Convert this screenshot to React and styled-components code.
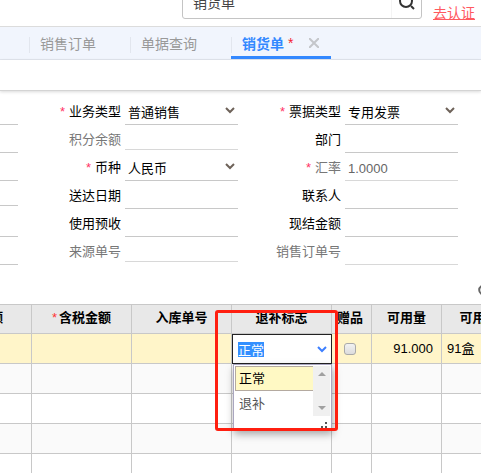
import { useEffect, useRef, useState } from "react";
import styled, { createGlobalStyle } from "styled-components";

const leftFields = [{}, {}, {}, { short: true }, {}, {}];

const middleFields = [
    { id: "bizType", label: "业务类型", required: true, options: ["普通销售"] },
    { id: "points", label: "积分余额", muted: true, short: true },
    { id: "currency", label: "币种", required: true, options: ["人民币"] },
    { id: "deliveryDate", label: "送达日期" },
    { id: "prepaid", label: "使用预收" },
    { id: "sourceNo", label: "来源单号", muted: true, short: true },
];

const rightFields = [
    { id: "invoiceType", label: "票据类型", required: true, options: ["专用发票"] },
    { id: "department", label: "部门" },
    { id: "rate", label: "汇率", required: true, muted: true, value: "1.0000" },
    { id: "contact", label: "联系人" },
    { id: "cashAmount", label: "现结金额" },
    { id: "orderNo", label: "销售订单号", muted: true },
];

const emptyRows = [1, 2, 3, 4];

const Chevron = () => (
    <svg width="10" height="7" viewBox="0 0 10 7" fill="none" stroke="currentColor" strokeWidth="2">
        <path d="M1 1l4 4 4-4" />
    </svg>
);

const Field = ({ field }) => {
    const { id, label, required, muted, short, options, value } = field;

    return (
        <FieldRow>
            <FieldLabel htmlFor={id} $muted={muted}>
                {required && <Star>*</Star>}
                {label}
            </FieldLabel>
            <FieldBox $short={short} $muted={muted}>
                {options ? (
                    <>
                        <FieldSelect id={id}>
                            {options.map((option) => {
                                return <option key={option}>{option}</option>
                            })}
                        </FieldSelect>
                        <Chevron />
                    </>
                ) : (
                    <FieldInput id={id} defaultValue={value} readOnly={muted} />
                )}
            </FieldBox>
        </FieldRow>
    )
};

// Editable cell with its open list
const FlagEditor = () => {
    const [flag, setFlag] = useState("正常");
    const inputRef = useRef(null);

    useEffect(() => {
        inputRef.current.focus();
        inputRef.current.select();
    }, [flag]);

    return (
        <>
            <Editor>
                <EditorInput
                    ref={inputRef}
                    aria-label="退补标志"
                    role="combobox"
                    aria-expanded="true"
                    aria-controls="flag-list"
                    value={flag}
                    readOnly
                />
                <Chevron />
            </Editor>
            <Popup>
                <PopupBody>
                    <Options id="flag-list" role="listbox">
                        {["正常", "退补"].map((option) => {
                            return (
                                <Option
                                    key={option}
                                    role="option"
                                    aria-selected={option === flag}
                                    $active={option === flag}
                                    onClick={() => setFlag(option)}
                                >
                                    {option}
                                </Option>
                            )
                        })}
                    </Options>
                    <ScrollTrack>
                        <svg width="8" height="4" viewBox="0 0 8 4" fill="#a0a0a0"><path d="M0 4l4-4 4 4z" /></svg>
                        <svg width="8" height="4" viewBox="0 0 8 4" fill="#a0a0a0"><path d="M0 0l4 4 4-4z" /></svg>
                    </ScrollTrack>
                </PopupBody>
                <Grip width="6" height="6" viewBox="0 0 6 6" fill="#555">
                    <path d="M4 0h2v2h-2zM4 4h2v2h-2zM0 4h2v2h-2z" />
                </Grip>
            </Popup>
            <Highlight />
        </>
    )
};

const App = () => {
    return (
        <Page>
            <GlobalStyle />

            <TopBar>
                <Search>
                    <SearchInput aria-label="搜索" defaultValue="销货单" />
                    <SearchButton aria-label="搜索">
                        <svg width="16" height="16" viewBox="0 0 16 16" fill="none" stroke="#333" strokeWidth="2">
                            <circle cx="7" cy="7" r="6" />
                            <path d="M12 12l3 3" />
                        </svg>
                    </SearchButton>
                </Search>
                <VerifyLink href="#verify">去认证</VerifyLink>
            </TopBar>

            <Tabs>
                <Tab>销售订单</Tab>
                <Tab>单据查询</Tab>
                <Tab $active>
                    销货单<TabStar>*</TabStar>
                    <svg width="10" height="10" viewBox="0 0 10 10" fill="none" stroke="#c4c6ca" strokeWidth="2">
                        <path d="M0 0l10 10M10 0L0 10" />
                    </svg>
                </Tab>
            </Tabs>
            <Toolbar />

            <Form>
                <div>
                    {leftFields.map((field, i) => {
                        return <FieldRow key={i}><FieldLine $short={field.short} /></FieldRow>
                    })}
                </div>
                <div>
                    {middleFields.map((field) => {
                        return <Field key={field.id} field={field} />
                    })}
                </div>
                <div>
                    {rightFields.map((field) => {
                        return <Field key={field.id} field={field} />
                    })}
                </div>
            </Form>

            <GridTools>
                <IconButton aria-label="刷新">
                    <svg width="14" height="14" viewBox="0 0 14 14" fill="none" stroke="#666" strokeWidth="2">
                        <path d="M12 4a6 5 0 1 0 0 6" />
                    </svg>
                </IconButton>
            </GridTools>

            <Table>
                <colgroup>
                    <col width="42" />
                    <col width="100" />
                    <col width="100" />
                    <col width="100" />
                    <col width="40" />
                    <col width="70" />
                    <col width="88" />
                </colgroup>
                <thead>
                    <tr>
                        <Th $align="left">额</Th>
                        <Th><HeadStar>*</HeadStar>含税金额</Th>
                        <Th>入库单号</Th>
                        <Th>退补标志</Th>
                        <Th $align="left"><Tight>赠品</Tight></Th>
                        <Th>可用量</Th>
                        <Th>可用数量</Th>
                    </tr>
                </thead>
                <tbody>
                    <Row $current>
                        <Td />
                        <Td />
                        <Td />
                        <EditorTd><FlagEditor /></EditorTd>
                        <Td><Check type="checkbox" aria-label="赠品" /></Td>
                        <Td $align="right">91.000</Td>
                        <Td>91盒</Td>
                    </Row>
                    {emptyRows.map((row) => {
                        return (
                            <Row key={row}>
                                <Td /><Td /><Td /><Td /><Td /><Td /><Td />
                            </Row>
                        )
                    })}
                </tbody>
            </Table>
        </Page>
    )
}

export default App;

const GlobalStyle = createGlobalStyle`
    * {
        box-sizing: border-box;
    }

    body {
        margin: 0;
        background: #fff;
    }

    body, input, select, button {
        font-family: "Liberation Sans", "Noto Sans CJK SC", sans-serif;
        font-size: 13px;
        color: #000;
    }

    input, select, button {
        border: none;
        padding: 0;
        margin: 0;
        outline: none;
        background: transparent;
        appearance: none;
    }
`;

const Page = styled.div`
    height: 100vh;
    overflow: hidden;
`;

// Top bar and tabs ------------------------
const TopBar = styled.header`
    display: flex;
    justify-content: flex-end;
    align-items: flex-end;
    gap: 11px;
    height: 27px;
    padding-right: 6px;
    border-bottom: 1px solid #dcdcdc;
`;

const Search = styled.div`
    display: flex;
    flex: none;
    width: 240px;
    height: 34px;
    margin-bottom: 7px;
    border: 1px solid #c4c4c4;
    border-radius: 3px;
`;

const SearchInput = styled.input`
    flex: 1;
    min-width: 0;
    padding-left: 10px;
    font-size: 14px;
    color: #444;
`;

const SearchButton = styled.button`
    display: flex;
    align-items: center;
    justify-content: center;
    width: 30px;
    border-left: 1px solid #f4f4f4;
`;

const VerifyLink = styled.a`
    font-size: 14px;
    line-height: 26px;
    color: #ff5a5f;
`;

const Tabs = styled.nav`
    display: flex;
    height: 33px;
    padding-left: 29px;
    background: #f1f5fd;
    border-bottom: 1px solid #e2e6ee;
`;

const Tab = styled.button`
    display: flex;
    align-items: center;
    width: ${({ $active }) => ($active ? "100px" : "101px")};
    padding-left: 11px;
    padding-top: 3px;
    font-size: 14px;
    font-weight: ${({ $active }) => ($active ? "bold" : "normal")};
    color: ${({ $active }) => ($active ? "#3388ff" : "#999")};
    background: linear-gradient(#e2e6ee, #e2e6ee) 0 10px / 1px 16px no-repeat;
    border-bottom: 3px solid ${({ $active }) => ($active ? "#3388ff" : "transparent")};

    svg {
        margin-left: 16px;
    }
`;

const TabStar = styled.span`
    margin-left: 4px;
    font-weight: normal;
    color: #f5222d;
`;

const Toolbar = styled.div`
    height: 31px;
    border-bottom: 1px solid #d4d4d4;
    box-shadow: 0 1px 3px rgba(0, 0, 0, 0.15);
`;

// Form ------------------------
const Form = styled.form`
    display: grid;
    grid-template-columns: 18px 220px 220px;
    padding-top: 6px;
`;

const FieldRow = styled.div`
    display: flex;
    height: 28px;
`;

const FieldLine = styled.div`
    width: 100%;
    height: ${({ $short }) => ($short ? "25px" : "28px")};
    border-bottom: 1px solid #c8c8c8;
`;

const FieldLabel = styled.label`
    flex: 1;
    padding-right: 4px;
    padding-top: 2px;
    line-height: 26px;
    text-align: right;
    color: ${({ $muted }) => ($muted ? "#777" : "#000")};
`;

const Star = styled.span`
    margin-right: 4px;
    color: #ff3366;
`;

const FieldBox = styled.div`
    display: flex;
    align-items: center;
    width: 113px;
    height: ${({ $short }) => ($short ? "25px" : "28px")};
    padding: 0 3px;
    border-bottom: 1px solid ${({ $muted }) => ($muted ? "#d8d8d8" : "#c8c8c8")};
    color: #6e6259;
`;

const FieldSelect = styled.select`
    flex: 1;
    min-width: 0;
    height: 26px;
    padding-top: 4px;
`;

const FieldInput = styled.input`
    width: 100%;
    height: 24px;
    padding-top: 4px;
    color: #666;
`;

// Grid ------------------------
const GridTools = styled.div`
    display: flex;
    justify-content: flex-end;
    align-items: center;
    height: 39px;
    padding-top: 10px;
`;

const IconButton = styled.button`
    display: flex;
    flex: none;
    margin-right: -11px;
`;

const Table = styled.table`
    table-layout: fixed;
    width: 540px;
    margin-left: -10px;
    border-collapse: separate;
    border-spacing: 0;
    border-top: 1px solid #c8c8c8;
`;

const Th = styled.th`
    height: 29px;
    padding: 0 0 2px;
    line-height: 20px;
    text-align: ${({ $align }) => $align || "center"};
    white-space: nowrap;
    background: #e8e8e8;
    border-right: 1px solid #c8c8c8;
    border-bottom: 1px solid #c8c8c8;
`;

const Tight = styled.span`
    padding-left: 5px;
`;

const HeadStar = styled.span`
    margin-right: 2px;
    font-weight: normal;
    color: #ff3333;
`;

const Row = styled.tr`
    background: ${({ $current }) => ($current ? "#fff5c9" : "#fff")};

    &:nth-child(even) {
        background: #fafafa;
    }
`;

const Td = styled.td`
    height: 30px;
    padding: 0 ${({ $align }) => ($align === "right" ? "8px" : "5px")};
    line-height: 20px;
    text-align: ${({ $align }) => $align || "left"};
    border-right: 1px solid #c8c8c8;
    border-bottom: 1px solid #c8c8c8;
`;

const EditorTd = styled.td`
    position: relative;
    height: 30px;
    padding: 0;
`;

const Editor = styled.div`
    display: flex;
    align-items: center;
    height: 30px;
    padding: 0 4px 0 5px;
    background: #fff;
    border: 1px solid #222;
    color: #3d7fff;
`;

const EditorInput = styled.input`
    flex: 1;
    min-width: 0;

    &::selection {
        color: #fff;
        background: #3390ff;
    }
`;

const Popup = styled.div`
    position: absolute;
    z-index: 1;
    top: 30px;
    left: 1px;
    width: 99px;
    height: 66px;
    padding: 1px;
    background: #fff;
    border: 1px solid #aaa6c0;
    box-shadow: 1px 4px 8px rgba(0, 0, 0, 0.35);
`;

const PopupBody = styled.div`
    display: flex;
    height: 50px;
`;

const Options = styled.ul`
    flex: 1;
    margin: 0;
    padding: 0;
    list-style: none;
`;

const Option = styled.li`
    height: 25px;
    padding-left: 3px;
    line-height: 23px;
    color: ${({ $active }) => ($active ? "#000" : "#555")};
    background: ${({ $active }) => ($active ? "#fff9c4" : "#fff")};
    border: 1px solid ${({ $active }) => ($active ? "#b4aaa0" : "#fff")};
    border-right: none;
`;

const ScrollTrack = styled.div`
    display: flex;
    flex-direction: column;
    align-items: center;
    justify-content: space-between;
    width: 17px;
    padding: 6px 0;
    background: #f0f0f0;
`;

const Grip = styled.svg`
    display: block;
    margin: 6px 3px 0 auto;
`;

const Highlight = styled.div`
    position: absolute;
    z-index: 2;
    top: -24px;
    left: -17px;
    width: 123px;
    height: 121px;
    border: 3px solid #ff1f10;
    border-radius: 3px;
    pointer-events: none;
`;

const Check = styled.input`
    display: block;
    width: 12px;
    height: 12px;
    margin: 0 0 0 7px;
    background: linear-gradient(#f2f2f2, #dcdcdc);
    border: 1px solid #aaa;
    border-radius: 3px;
`;
